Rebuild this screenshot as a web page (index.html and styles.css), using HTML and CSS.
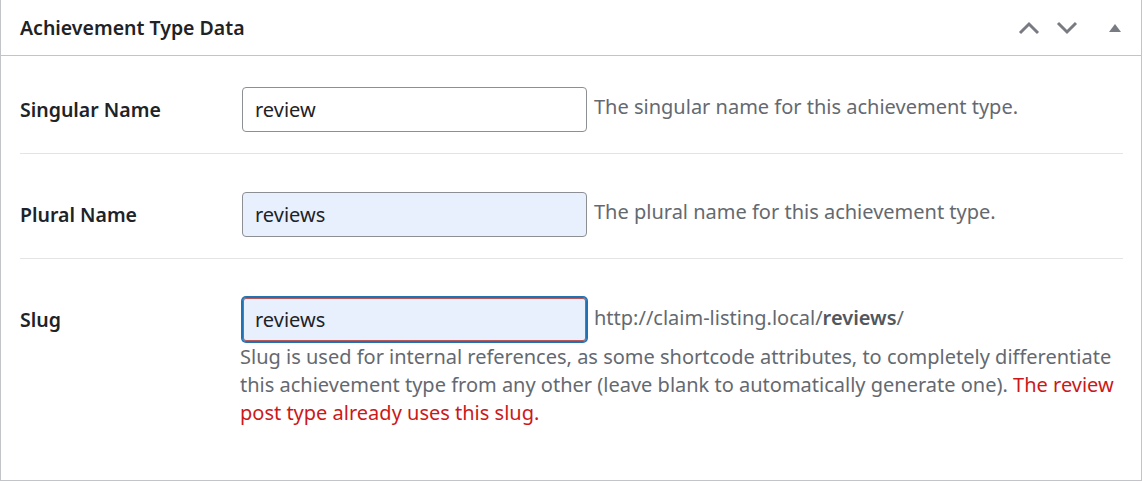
FILE: index.html
```html
<!DOCTYPE html>
<html>
<head>
<meta charset="utf-8">
<link rel="stylesheet" href="styles.css">
</head>
<body>
<div class="postbox">
  <div class="postbox-header">
    <h2 class="hndle">Achievement Type Data</h2>
    <div class="handle-actions">
      <button class="handle-btn" aria-label="Move up">
        <svg width="22" height="14" viewBox="0 0 22 14"><path d="M2 12 L11 3 L20 12" fill="none" stroke="#787c82" stroke-width="3"/></svg>
      </button>
      <button class="handle-btn" aria-label="Move down">
        <svg width="22" height="14" viewBox="0 0 22 14"><path d="M2 2 L11 11 L20 2" fill="none" stroke="#787c82" stroke-width="3"/></svg>
      </button>
      <button class="handle-btn toggle" aria-label="Toggle panel">
        <svg width="12" height="10" viewBox="0 0 12 10"><path d="M0 9 L6 1 L12 9 Z" fill="#787c82"/></svg>
      </button>
    </div>
  </div>
  <div class="inside">
    <div class="field-row first">
      <label class="field-label">Singular Name</label>
      <div class="field-body">
        <div class="field-line">
          <input class="text-input" type="text" value="review">
          <span class="desc">The singular name for this achievement type.</span>
        </div>
      </div>
    </div>
    <div class="field-row">
      <label class="field-label">Plural Name</label>
      <div class="field-body">
        <div class="field-line">
          <input class="text-input autofill" type="text" value="reviews">
          <span class="desc">The plural name for this achievement type.</span>
        </div>
      </div>
    </div>
    <div class="field-row last">
      <label class="field-label slug-label">Slug</label>
      <div class="field-body">
        <div class="field-line">
          <input class="text-input autofill focused" type="text" value="reviews">
          <span class="desc url">http://claim-listing.local/<strong>reviews</strong>/</span>
        </div>
        <p class="desc block">Slug is used for internal references, as some shortcode attributes, to completely differentiate this achievement type from any other (leave blank to automatically generate one). <span class="error">The review post type already uses this slug.</span></p>
      </div>
    </div>
  </div>
</div>
</body>
</html>
```
FILE: styles.css
```css
html, body {
  margin: 0;
  padding: 0;
  background: #fff;
}
body {
  font-family: "Noto Sans", "Segoe UI", sans-serif;
  color: #1d2327;
}
.postbox {
  box-sizing: border-box;
  width: 1142px;
  height: 481px;
  border: 1px solid #c3c4c7;
  border-top: none;
  background: #fff;
}
.postbox-header {
  height: 55px;
  border-bottom: 1px solid #c3c4c7;
  display: flex;
  align-items: center;
  justify-content: space-between;
  padding: 0 0 0 19px;
}
.hndle {
  margin: 0;
  font-size: 19.5px;
  font-weight: 600;
  color: #1d2327;
}
.handle-actions {
  display: flex;
  align-items: center;
  padding-right: 7px;
}
.handle-btn {
  border: none;
  background: none;
  padding: 0;
  width: 38px;
  height: 36px;
  display: flex;
  align-items: center;
  justify-content: center;
}
.handle-btn.toggle {
  width: 38px;
  margin-left: 10px;
}
.inside {
  padding: 0 18px 0 19px;
}
.field-row {
  display: flex;
  align-items: center;
  border-bottom: 1px solid #e3e4e6;
  padding: 38px 0 21px;
}
.field-row.first {
  padding-top: 31px;
}
.field-row.last {
  border-bottom: none;
  align-items: flex-start;
}
.field-label {
  width: 222px;
  flex: none;
  font-size: 19.5px;
  font-weight: 600;
  color: #1d2327;
}
.slug-label {
  line-height: 45px;
}
.field-body {
  flex: 1;
  min-width: 0;
}
.field-line {
  display: flex;
  align-items: center;
  gap: 7px;
}
.text-input {
  box-sizing: border-box;
  width: 345px;
  height: 45px;
  border: 1px solid #8c8f94;
  border-radius: 4px;
  padding: 0 12px;
  font-family: inherit;
  font-size: 20px;
  color: #1d2327;
  background: #fff;
  outline: none;
  margin: 0;
}
.text-input.autofill {
  background: #e8f0fe;
}
.text-input.focused {
  border: 1px solid #2271b1;
  box-shadow: 0 0 0 1px #2271b1, inset 0 0 0 1px #b85a5a;
}
.desc {
  font-size: 20px;
  color: #646970;
  margin-top: -6px;
}
.desc.url {
  margin-top: -4px;
}
.desc.url strong {
  font-weight: 600;
  color: #50575e;
}
.desc.block {
  margin: 0 0 0 -2px;
  padding-top: 1px;
  line-height: 28px;
}
.error {
  color: #cc1818;
}
```
